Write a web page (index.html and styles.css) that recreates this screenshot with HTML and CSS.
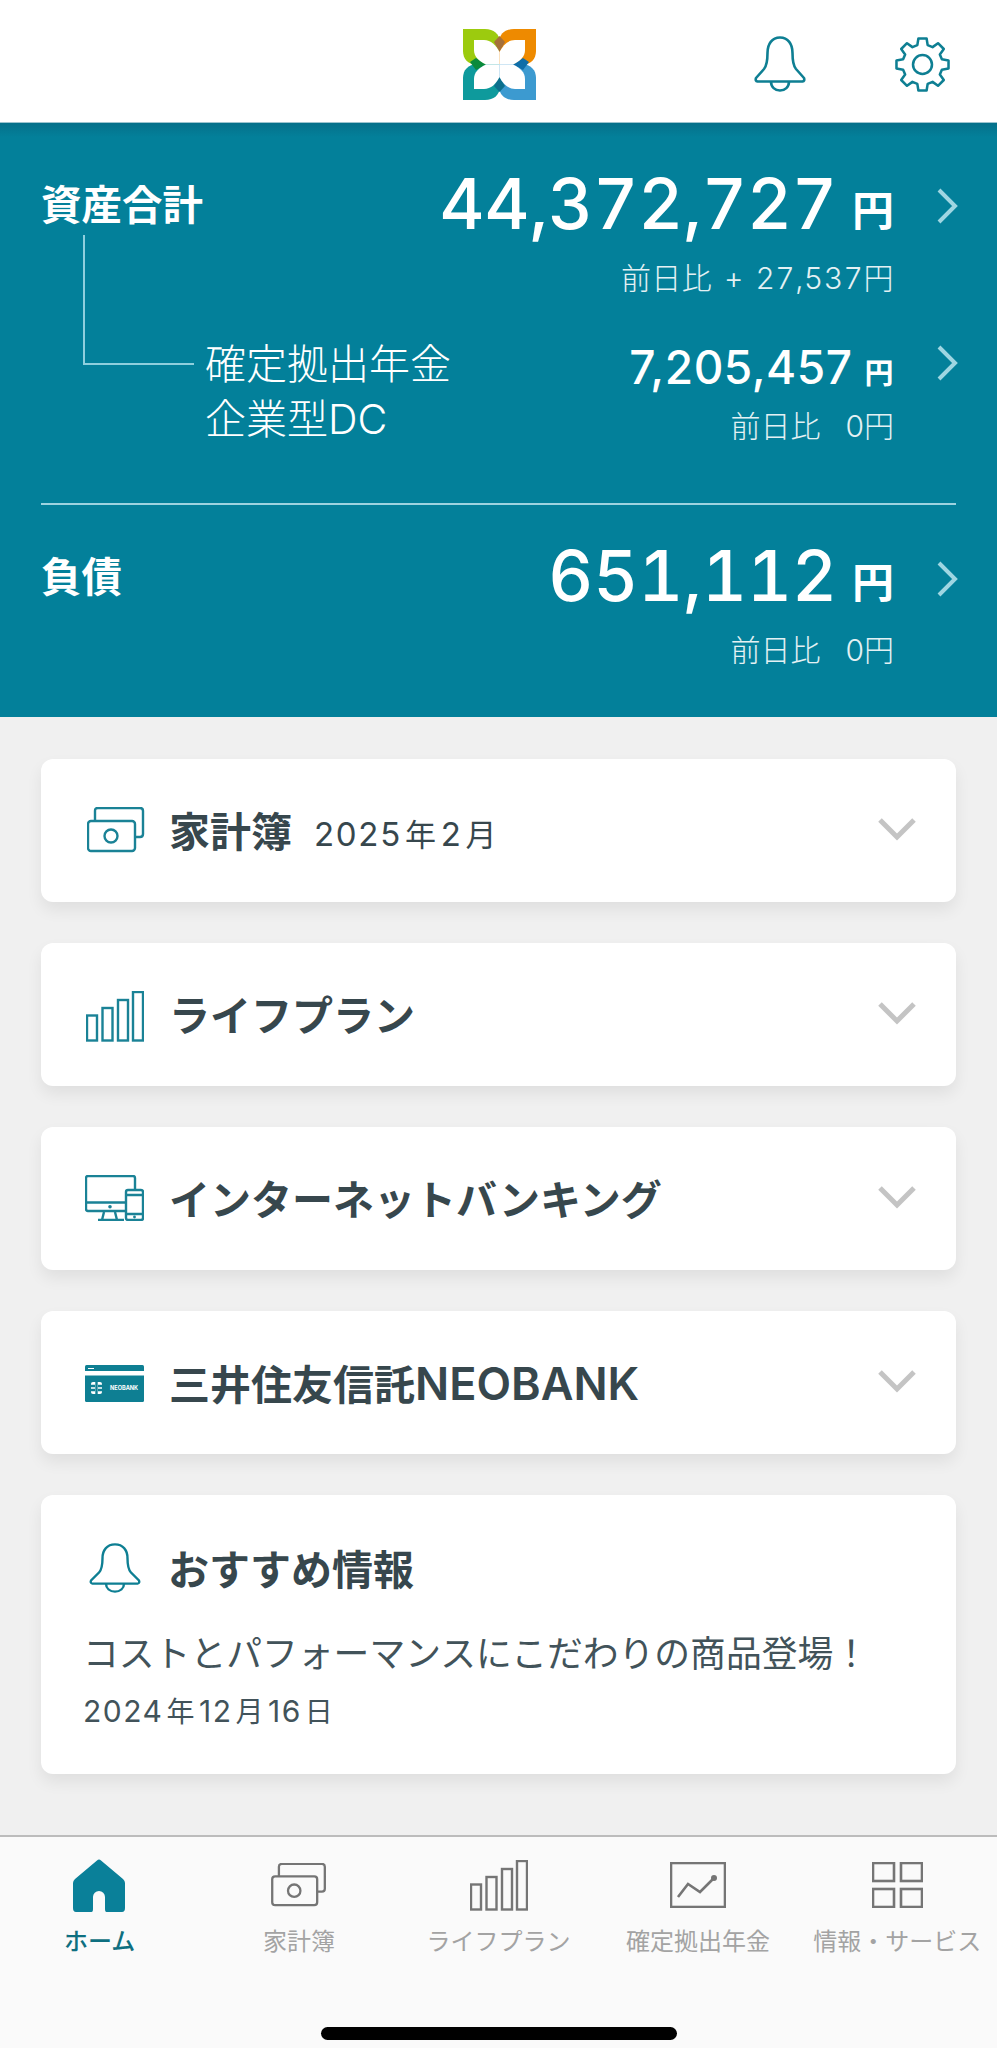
FILE: index.html
```html
<!DOCTYPE html>
<html lang="ja">
<head>
    <meta charset="UTF-8">
    <meta name="viewport" content="width=device-width, initial-scale=1.0">
    <title>ホーム</title>
    <link rel="stylesheet" href="styles.css">
</head>
<body>
    <svg class="defs" width="0" height="0">
        <symbol id="i-money" viewBox="0 0 58 46">
            <rect x="1" y="14" width="47" height="30" rx="3"/>
            <path d="M8 14V4Q8 1 11 1H53Q56 1 56 4V27Q56 30 53 30H48"/>
            <circle cx="24" cy="29" r="6.5"/>
        </symbol>
        <symbol id="i-bars" viewBox="0 0 58 51">
            <rect x="1" y="24.5" width="10" height="25"/>
            <rect x="16.5" y="17" width="10" height="32.500"/>
            <rect x="32" y="9" width="10" height="40.500"/>
            <rect x="47" y="1" width="10" height="48.500"/>
        </symbol>
    </svg>

    <header class="topbar">
        <svg class="logo" viewBox="0 0 73 71">
            <path fill="#9ccb0e" d="M0 0H22C31 0 36 5 37 12V36H13C5 35 0 30 0 22Z"/>
            <path fill="#ee8a00" d="M73 0H51C42 0 37 5 36 12V36H60C68 35 73 30 73 22Z"/>
            <path fill="#0e9a9c" d="M0 71H22C31 71 36 66 37 59V35H13C5 36 0 41 0 49Z"/>
            <path fill="#3c9ad0" d="M73 71H51C42 71 37 66 36 59V35H60C68 36 73 41 73 49Z"/>
            <path fill="#a5703a" d="M36.500 7L42 13L36.500 23L31 13Z"/>
            <path fill="#0a8a3c" d="M7 33L13 29L23 35.500L13 41Z"/>
            <path fill="#0f6ea8" d="M66 33L60 29L50 35.500L60 41Z"/>
            <path fill="#0b6f8c" d="M36.500 63L42 57L36.500 48L31 57Z"/>
            <path fill="#fff" d="M11 11H21C28 11 33 16 36.500 23V35.500H23C16 32 11 28 11 21Z"/>
            <path fill="#fff" d="M62 11H52C45 11 40 16 36.500 23V35.500H50C57 32 62 28 62 21Z"/>
            <path fill="#fff" d="M11 60H21C28 60 33 55 36.500 48V35.500H23C16 39 11 43 11 50Z"/>
            <path fill="#fff" d="M62 60H52C45 60 40 55 36.500 48V35.500H50C57 39 62 43 62 50Z"/>
        </svg>
        <svg class="bell" viewBox="0 0 52 56">
            <path d="M26 1.500C34 1.500 38.500 8 38.500 17C38.500 25 39.500 30 42 33L50 42Q51 45 48.500 45.500H3.500Q1 45 2 42L10 33C12.500 30 13.500 25 13.500 17C13.500 8 18 1.500 26 1.500Z"/>
            <path d="M17 45.500C17 51 21 54.500 26 54.500C31 54.500 35 51 35 45.500"/>
        </svg>
        <svg class="gear" viewBox="-28 -28 56 56">
            <polygon points="-4.900,-18.400 -3.900,-24.700 3.900,-24.700 4.900,-18.400 9.550,-16.480 14.710,-20.220 20.220,-14.710 16.480,-9.550 18.400,-4.900 24.700,-3.900 24.700,3.900 18.400,4.900 16.480,9.550 20.220,14.710 14.710,20.220 9.550,16.480 4.900,18.400 3.900,24.700 -3.900,24.700 -4.900,18.400 -9.550,16.480 -14.710,20.220 -20.220,14.710 -16.480,9.550 -18.400,4.900 -24.700,3.900 -24.700,-3.900 -18.400,-4.900 -16.480,-9.550 -20.220,-14.710 -14.710,-20.220 -9.550,-16.480"/>
            <circle r="9"/>
        </svg>
    </header>

    <section class="hero">
        <div class="row row-total">
            <div class="label">資産合計</div>
            <div class="amounts">
                <div class="value">44,372,727<span class="yen">円</span></div>
                <div class="diff diff-up">前日比 + 27,537円</div>
            </div>
            <svg class="arrow" viewBox="0 0 22 36"><path d="M3 2L19 18L3 34"/></svg>
        </div>

        <div class="row row-dc">
            <span class="connector"></span>
            <div class="label-sub">確定拠出年金<br>企業型DC</div>
            <div class="amounts">
                <div class="value-sub">7,205,457<span class="yen-sub">円</span></div>
                <div class="diff">前日比&nbsp;&nbsp;0円</div>
            </div>
            <svg class="arrow" viewBox="0 0 22 36"><path d="M3 2L19 18L3 34"/></svg>
        </div>

        <div class="divider"></div>

        <div class="row row-debt">
            <div class="label">負債</div>
            <div class="amounts">
                <div class="value">651,112<span class="yen">円</span></div>
                <div class="diff">前日比&nbsp;&nbsp;0円</div>
            </div>
            <svg class="arrow" viewBox="0 0 22 36"><path d="M3 2L19 18L3 34"/></svg>
        </div>
    </section>

    <main class="cards">
        <div class="card">
            <svg class="card-icon icon-money"><use href="#i-money"/></svg>
            <h2 class="card-title">家計簿</h2>
            <span class="card-month">2025<span class="unit">年</span>2<span class="unit">月</span></span>
            <svg class="chevron" viewBox="0 0 40 24"><path d="M3 3L20 20L37 3"/></svg>
        </div>
        <div class="card">
            <svg class="card-icon icon-bars"><use href="#i-bars"/></svg>
            <h2 class="card-title">ライフプラン</h2>
            <svg class="chevron" viewBox="0 0 40 24"><path d="M3 3L20 20L37 3"/></svg>
        </div>
        <div class="card">
            <svg class="card-icon icon-devices" viewBox="0 0 59 46">
                <path d="M40 36H3Q1 36 1 34V3Q1 1 3 1H48Q50 1 50 3V14"/>
                <path d="M1 27.500H40M19 37L17 45M30 37L32 45M13 45H39"/>
                <circle class="solid" cx="25" cy="31.700" r="1.800"/>
                <rect x="41" y="15" width="17" height="30" rx="2"/>
                <path d="M41 20H58M41 39H58"/>
                <circle class="solid" cx="49.500" cy="42" r="1.400"/>
            </svg>
            <h2 class="card-title">インターネットバンキング</h2>
            <svg class="chevron" viewBox="0 0 40 24"><path d="M3 3L20 20L37 3"/></svg>
        </div>
        <div class="card">
            <svg class="card-icon icon-neo" viewBox="0 0 59 37">
                <rect width="59" height="37" rx="1.500" fill="#0e7f93"/>
                <rect y="6" width="59" height="4.500" fill="#fff"/>
                <rect x="3" y="3" width="6" height="1" fill="#fff"/>
                <rect x="6" y="17" width="11" height="12" rx="2" fill="#fff"/>
                <path d="M11.500 17V29M6 21H10M6 25H10M13 21H17M13 25H17" stroke="#0e7f93" fill="none"/>
                <text x="25" y="25" class="neo-text">NEOBANK</text>
            </svg>
            <h2 class="card-title">三井住友信託<span class="latin">NEOBANK</span></h2>
            <svg class="chevron" viewBox="0 0 40 24"><path d="M3 3L20 20L37 3"/></svg>
        </div>
        <div class="card card-news">
            <div class="news-head">
                <svg class="news-bell" viewBox="0 0 52 56" preserveAspectRatio="none">
                    <path d="M26 1.500C34 1.500 38.500 8 38.500 17C38.500 25 39.500 30 42 33L50 42Q51 45 48.500 45.500H3.500Q1 45 2 42L10 33C12.500 30 13.500 25 13.500 17C13.500 8 18 1.500 26 1.500Z"/>
                    <path d="M17 45.500C17 51 21 54.500 26 54.500C31 54.500 35 51 35 45.500"/>
                </svg>
                <h2 class="card-title">おすすめ情報</h2>
            </div>
            <p class="news-text">コストとパフォーマンスにこだわりの商品登場！</p>
            <p class="news-date">2024<span class="unit">年</span>12<span class="unit">月</span>16<span class="unit">日</span></p>
        </div>
    </main>

    <nav class="tabbar">
        <div class="tabs">
            <div class="tab active">
                <div class="tab-icon">
                    <svg class="ti-home" viewBox="0 0 52 53"><path d="M26 .5Q27 .5 28 1.500L50 20Q52 22 52 24V49Q52 53 49 53H33.500Q32 53 32 50V38A6 6 0 0 0 20 38V50Q20 53 18.500 53H3Q0 53 0 49V24Q0 22 2 20L24 1.500Q25 .5 26 .5Z"/></svg>
                </div>
                <span>ホーム</span>
            </div>
            <div class="tab">
                <div class="tab-icon"><svg class="ti-money"><use href="#i-money"/></svg></div>
                <span>家計簿</span>
            </div>
            <div class="tab">
                <div class="tab-icon"><svg class="ti-bars"><use href="#i-bars"/></svg></div>
                <span>ライフプラン</span>
            </div>
            <div class="tab">
                <div class="tab-icon">
                    <svg class="ti-chart" viewBox="0 0 56 46">
                        <rect x="1" y="1" width="54" height="44"/>
                        <path d="M8 35L18 22L30 30L44 16"/>
                        <circle class="solid" cx="44" cy="16" r="3"/>
                    </svg>
                </div>
                <span>確定拠出年金</span>
            </div>
            <div class="tab">
                <div class="tab-icon">
                    <svg class="ti-grid" viewBox="0 0 51 46">
                        <rect x="1" y="1" width="21" height="18"/>
                        <rect x="29" y="1" width="21" height="18"/>
                        <rect x="1" y="27" width="21" height="18"/>
                        <rect x="29" y="27" width="21" height="18"/>
                    </svg>
                </div>
                <span class="tab-wide">情報・サービス</span>
            </div>
        </div>
        <div class="home-indicator"></div>
    </nav>
</body>
</html>
```

FILE: styles.css
```css
* {
    box-sizing: border-box;
}

body {
    margin: 0;
    height: 2048px;
    display: flex;
    flex-direction: column;
    background-color: #f0f0f0;
    color: #37474d;
    font-family: Inter, "Noto Sans CJK JP", sans-serif;
    overflow: hidden;
}

.defs {
    position: absolute;
}

#i-money *, #i-bars * {
    fill: none;
    stroke: currentColor;
    stroke-width: 2.4;
}

/* header */
.topbar {
    height: 123px;
    display: flex;
    align-items: center;
    background-color: #fff;
    border-bottom: 1px solid #9cc4cf;
    padding-bottom: 4px;
}

.logo {
    width: 73px;
    height: 71px;
    margin-left: 463px;
    margin-top: 11px;
}

.bell, .gear, .news-bell {
    fill: none;
    stroke: #0e7f93;
    stroke-width: 2.6;
    stroke-linejoin: round;
}

.bell {
    width: 52px;
    height: 56px;
    margin-left: 218px;
    margin-top: 10px;
}

.gear {
    width: 59px;
    height: 59px;
    margin-left: 87px;
    margin-top: 11px;
    stroke-width: 2.4;
}

/* hero */
.hero {
    height: 594px;
    padding: 0 41px;
    background: linear-gradient(#05708a, #03809a 14px);
    color: #fff;
}

.row {
    position: relative;
    display: flex;
    justify-content: space-between;
}

.row-total {
    padding-top: 41px;
    height: 214px;
}

.row-dc {
    height: 166px;
    padding-left: 164px;
}

.row-debt {
    padding-top: 31px;
}

.label {
    font-size: 40.5px;
    font-weight: 700;
    line-height: 80px;
    padding-top: 2px;
    width: 200px;
}

.amounts {
    margin-left: auto;
    margin-right: 62px;
    text-align: right;
}

.value {
    font-size: 69.5px;
    font-weight: 500;
    line-height: 80px;
    font-variant-numeric: tabular-nums;
}

.yen {
    font-size: 42px;
    font-weight: 700;
    margin-left: 15px;
    vertical-align: 3px;
}

.diff {
    margin-top: 7px;
    font-size: 30px;
    font-weight: 300;
    line-height: 40px;
    word-spacing: 4px;
    color: #e3f1f4;
}

.diff-up {
    letter-spacing: .5px;
    word-spacing: 3px;
    font-variant-numeric: tabular-nums;
}

.value-sub {
    font-size: 46px;
    font-weight: 500;
    line-height: 60px;
    letter-spacing: .5px;
}

.yen-sub {
    font-size: 29px;
    font-weight: 700;
    margin-left: 12px;
}

.row-dc .diff {
    margin-top: 2px;
}

.label-sub {
    font-size: 41px;
    font-weight: 300;
    line-height: 55px;
}

.connector {
    position: absolute;
    left: 42px;
    top: -102px;
    width: 111px;
    height: 130px;
    border-left: 2.5px solid #8fcfdd;
    border-bottom: 2.5px solid #8fcfdd;
}

.arrow {
    position: absolute;
    right: -2px;
    top: 65px;
    width: 22px;
    height: 36px;
    fill: none;
    stroke: #9fd6e2;
    stroke-width: 4;
}

.row-dc .arrow {
    top: 8px;
}

.row-debt .arrow {
    top: 56px;
}

.divider {
    height: 2px;
    background-color: #9ed3e0;
}

/* cards */
.cards {
    flex: 1;
    padding: 41.5px 41px 0;
    display: flex;
    flex-direction: column;
    gap: 41px;
}

.card {
    height: 143px;
    display: flex;
    align-items: center;
    padding: 0 39px 0 44px;
    background-color: #fff;
    border-radius: 12px;
    box-shadow: 0 8px 16px rgba(0, 0, 0, .07);
}

.card-icon {
    flex-shrink: 0;
    width: 58px;
    color: #1a8296;
    fill: none;
    stroke: currentColor;
    stroke-width: 2.4;
}

.icon-money {
    height: 46px;
    margin: 0 -2px 0 2px;
}

.icon-bars {
    height: 51px;
    margin: 4px -1px 0 1px;
}

.icon-devices {
    height: 46px;
    width: 59px;
    margin-right: -1px;
}

.icon-neo {
    height: 37px;
    width: 59px;
    margin: 3px -1px 0 0;
    stroke: none;
}

.neo-text {
    font-size: 5.6px;
    font-weight: 700;
    fill: #fff;
    stroke: none;
}

.solid {
    fill: currentColor;
    stroke: none;
}

.card-title {
    margin: 4px 0 0 26px;
    font-size: 41px;
    font-weight: 700;
    line-height: 56px;
    color: #37474d;
}

.latin {
    font-size: 45px;
    font-weight: 600;
}

.card-month {
    margin: 4px 0 0 22px;
    font-size: 33px;
    letter-spacing: 1.7px;
}

.unit {
    margin: 0 3px;
    font-size: 28px;
}

.card-month .unit {
    font-size: 31px;
}

.chevron {
    margin: -3px 0 0 auto;
    width: 40px;
    height: 24px;
    fill: none;
    stroke: #c4c4c4;
    stroke-width: 5;
}

.card-news {
    height: 279px;
    display: block;
    padding-top: 43px;
}

.news-head {
    display: flex;
    align-items: center;
}

.news-bell {
    width: 52px;
    height: 50px;
    margin-left: 4px;
    stroke-width: 2.4;
}

.news-head .card-title {
    margin-left: 27px;
}

.news-text {
    margin: 31px 0 0 -2px;
    font-size: 35.8px;
    line-height: 50px;
    color: #42535a;
}

.news-date {
    margin: 12px 0 0 -2px;
    font-size: 30px;
    line-height: 40px;
    letter-spacing: 1.5px;
    color: #42535a;
}

/* bottom tabs */
.tabbar {
    height: 213px;
    padding-top: 21px;
    background-color: #fafafa;
    border-top: 2px solid #bcbcbc;
}

.tabs {
    display: flex;
}

.tab {
    flex: 1;
    display: flex;
    flex-direction: column;
    align-items: center;
    font-size: 24px;
    line-height: 34px;
    color: #a3a3a3;
}

.tab.active {
    color: #0e6f80;
    font-weight: 500;
}

.tab-wide {
    white-space: nowrap;
}

.tab-icon {
    height: 54px;
    margin-bottom: 13px;
    display: flex;
    align-items: center;
    color: #757575;
    fill: none;
    stroke: currentColor;
    stroke-width: 2.4;
}

.ti-home {
    width: 52px;
    height: 53px;
    margin-left: -2px;
    fill: #0a8099;
    stroke: none;
}

.ti-money {
    width: 56px;
    height: 44px;
}

.ti-bars {
    width: 58px;
    height: 51px;
}

.ti-chart {
    width: 56px;
    height: 46px;
    stroke-width: 2.6;
}

.ti-grid {
    width: 51px;
    height: 46px;
    stroke-width: 2.6;
}

.home-indicator {
    width: 356px;
    height: 13px;
    margin: 68px auto 0;
    background-color: #000;
    border-radius: 7px;
}
```
